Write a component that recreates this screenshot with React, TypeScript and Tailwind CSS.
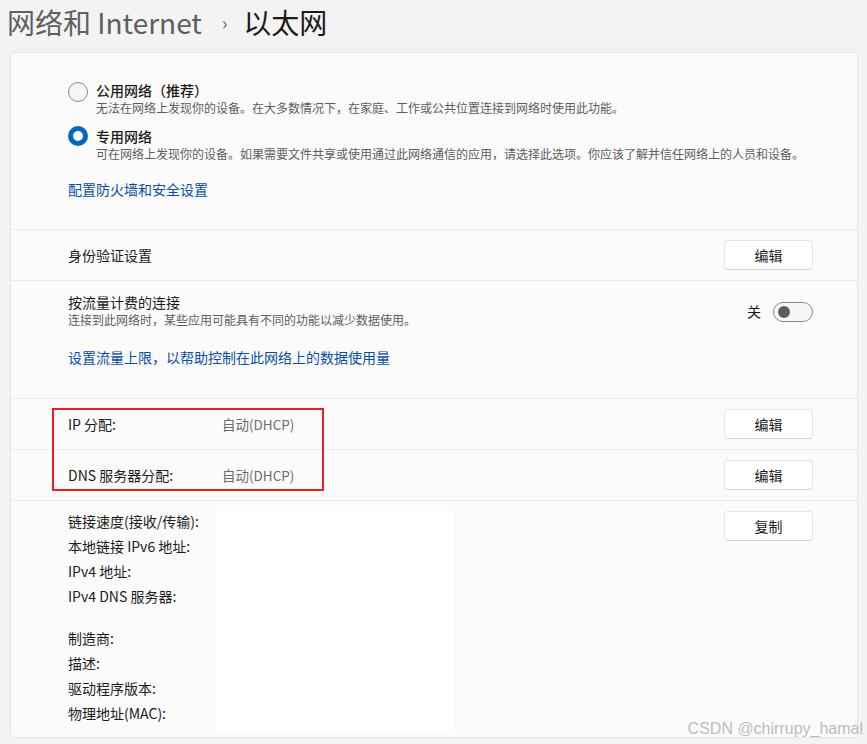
const font = { fontFamily: '"Noto Sans CJK SC", "Noto Sans", sans-serif' };

function EditButton({ label = "编辑" }: { label?: string }) {
  return (
    <button className="w-[89px] h-[30px] bg-white border border-[#e5e5e5] border-b-[#d4d4d4] rounded-[4px] text-[14px] text-[#1b1b1b] flex items-center justify-center">
      {label}
    </button>
  );
}

function Radio({ checked }: { checked?: boolean }) {
  return checked ? (
    <div className="w-[20px] h-[20px] rounded-full bg-[#0067c0] flex items-center justify-center shrink-0">
      <div className="w-[10px] h-[10px] rounded-full bg-white" />
    </div>
  ) : (
    <div className="w-[20px] h-[20px] rounded-full border border-[#8a8a8a] bg-[#f5f5f5] shrink-0" />
  );
}

const props = [
  "链接速度(接收/传输):",
  "本地链接 IPv6 地址:",
  "IPv4 地址:",
  "IPv4 DNS 服务器:",
  "",
  "制造商:",
  "描述:",
  "驱动程序版本:",
  "物理地址(MAC):",
];

export default function App() {
  return (
    <div className="relative w-[867px] h-[744px] bg-[#f3f3f3] overflow-hidden text-[#1b1b1b]" style={font}>
      {/* Breadcrumb */}
      <div className="h-[52px] flex items-center pl-[7px] pb-[8px] text-[28px] leading-none">
        <span className="text-[#5f5f5f]">网络和 Internet</span>
        <span className="text-[#5f5f5f] text-[18px] ml-[20px] mr-[16px]">›</span>
        <span className="text-[#1a1a1a]">以太网</span>
      </div>

      {/* Card */}
      <div className="mx-[10px] w-[848px] h-[686px] bg-[#fbfbfb] border border-[#e5e5e5] rounded-[4px] flex flex-col">
        {/* Network profile */}
        <div className="h-[177px] pl-[57px] pt-[27px] border-b border-[#ebebeb]">
          <div className="flex items-start gap-[8px]">
            <div className="mt-[2px]"><Radio /></div>
            <div>
              <div className="text-[14px] leading-[20px] font-medium">公用网络（推荐）</div>
              <div className="text-[12px] leading-[16px] text-[#5d5d5d]">
                无法在网络上发现你的设备。在大多数情况下，在家庭、工作或公共位置连接到网络时使用此功能。
              </div>
            </div>
          </div>
          <div className="flex items-start gap-[8px] mt-[10px]">
            <div><Radio checked /></div>
            <div>
              <div className="text-[14px] leading-[20px] font-medium">专用网络</div>
              <div className="text-[12px] leading-[16px] text-[#5d5d5d]">
                可在网络上发现你的设备。如果需要文件共享或使用通过此网络通信的应用，请选择此选项。你应该了解并信任网络上的人员和设备。
              </div>
            </div>
          </div>
          <div className="mt-[17px] text-[14px] leading-[20px] text-[#0a4ea2]">配置防火墙和安全设置</div>
        </div>

        {/* Auth */}
        <div className="h-[51px] pl-[57px] pr-[44px] flex items-center justify-between border-b border-[#ebebeb]">
          <span className="text-[14px]">身份验证设置</span>
          <EditButton />
        </div>

        {/* Metered */}
        <div className="h-[118px] pl-[57px] pr-[44px] pt-[11px] border-b border-[#ebebeb]">
          <div className="flex items-start justify-between">
            <div>
              <div className="text-[14px] leading-[20px]">按流量计费的连接</div>
              <div className="text-[12px] leading-[16px] text-[#5d5d5d]">连接到此网络时，某些应用可能具有不同的功能以减少数据使用。</div>
            </div>
            <div className="flex items-center gap-[12px] mt-[9px]">
              <span className="text-[14px]">关</span>
              <div className="w-[40px] h-[20px] rounded-full border border-[#8a8a8a] bg-[#f6f6f6] flex items-center pl-[4px]">
                <div className="w-[12px] h-[12px] rounded-full bg-[#5d5d5d]" />
              </div>
            </div>
          </div>
          <div className="mt-[19px] text-[14px] leading-[20px] text-[#0a4ea2]">设置流量上限，以帮助控制在此网络上的数据使用量</div>
        </div>

        {/* IP / DNS */}
        <div className="relative">
          <div className="h-[51px] pl-[57px] pr-[44px] flex items-center border-b border-[#ebebeb]">
            <span className="w-[154px] text-[14px]">IP 分配:</span>
            <span className="flex-1 text-[13.5px] text-[#6b6b6b]">自动(DHCP)</span>
            <EditButton />
          </div>
          <div className="h-[51px] pl-[57px] pr-[44px] flex items-center border-b border-[#ebebeb]">
            <span className="w-[154px] text-[14px]">DNS 服务器分配:</span>
            <span className="flex-1 text-[13.5px] text-[#6b6b6b]">自动(DHCP)</span>
            <EditButton />
          </div>
          <div className="absolute left-[41px] top-[9px] w-[272px] h-[83px] border-2 border-[#ec1c24]" />
        </div>

        {/* Properties */}
        <div className="flex-1 pl-[57px] pr-[44px] pt-[10px] flex">
          <div className="w-[148px] flex flex-col">
            {props.map((p, i) => (
              <div key={i} className={p ? "h-[25px] text-[14px] leading-[20px]" : "h-[17px]"}>{p}</div>
            ))}
          </div>
          <div className="w-[238px] h-[219px] bg-white" />
          <div className="flex-1 flex justify-end">
            <EditButton label="复制" />
          </div>
        </div>
      </div>

      <div
        className="absolute right-[4px] bottom-[3px] text-[16px] text-[#bdbdbd]"
        style={{ fontFamily: '"Liberation Sans", sans-serif' }}
      >
        CSDN @chirrupy_hamal
      </div>
    </div>
  );
}
